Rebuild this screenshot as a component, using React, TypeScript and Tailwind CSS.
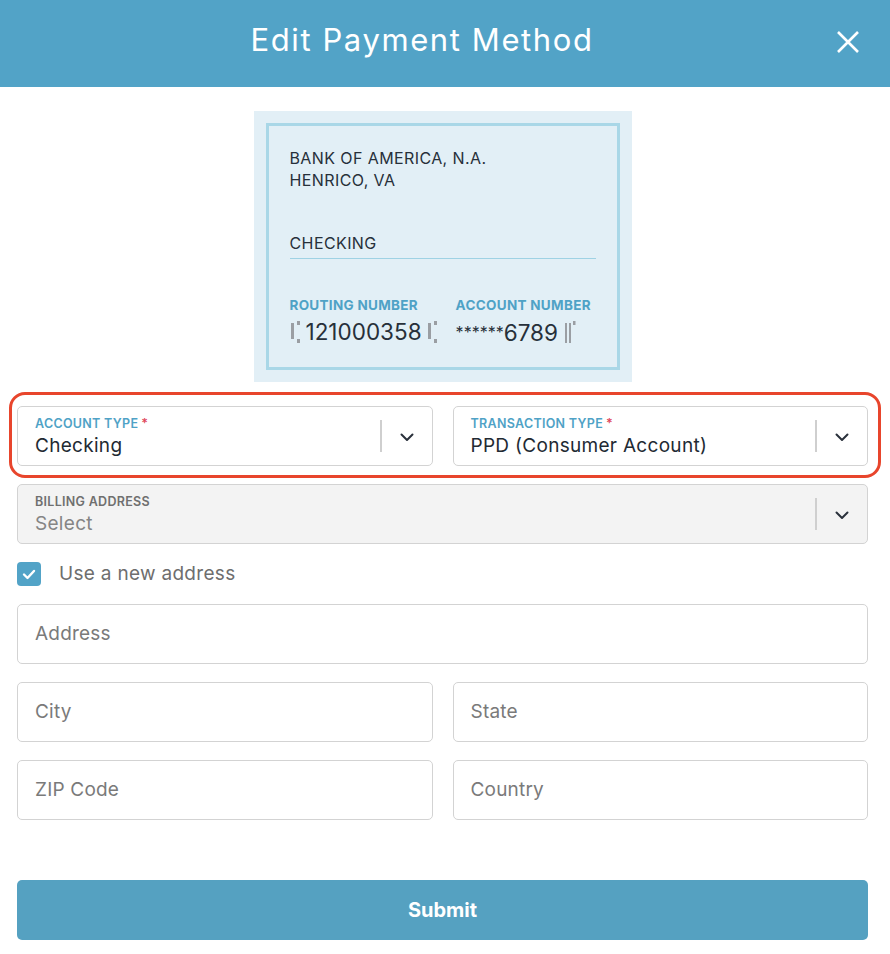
import React from "react";

const font = { fontFamily: 'Inter, "Open Sans", "Liberation Sans", sans-serif' };

function Chevron() {
    return (
        <svg width="14" height="9" viewBox="0 0 14 9" fill="none">
            <path d="M1.5 1.5 L7 7 L12.5 1.5" stroke="#2a313b" strokeWidth="2" strokeLinecap="round" strokeLinejoin="round" />
        </svg>
    );
}

function Transit() {
    return (
        <svg width="11" height="23" viewBox="0 0 11 23" className="shrink-0">
            <rect x="1" y="2" width="3" height="16" fill="#9a9ea3" />
            <rect x="7" y="0" width="3" height="4" fill="#9a9ea3" />
            <rect x="7" y="18" width="3" height="4" fill="#9a9ea3" />
        </svg>
    );
}

function OnUs() {
    return (
        <svg width="12" height="23" viewBox="0 0 12 23" className="shrink-0">
            <rect x="1" y="2" width="2" height="20" fill="#9a9ea3" />
            <rect x="5" y="2" width="2" height="20" fill="#9a9ea3" />
            <rect x="9" y="0" width="2.5" height="4" fill="#9a9ea3" />
        </svg>
    );
}

interface SelectProps {
    label: string;
    value: string;
    required?: boolean;
    disabled?: boolean;
}

function SelectField({ label, value, required, disabled }: SelectProps) {
    return (
        <div className={`flex h-[60px] items-center rounded-[5px] border border-[#d3d3d3] ${disabled ? "bg-[#f3f3f3]" : "bg-white"}`}>
            <div className="flex min-w-0 flex-1 flex-col pl-[17px] pt-[2px]">
                <div className={`text-[12.5px] font-semibold leading-[16px] tracking-[0.3px] ${disabled ? "text-[#6f6f6f]" : "text-[#4fa2c6]"}`}>
                    {label}
                    {required && <span className="ml-[3px] text-[#e0455a]">*</span>}
                </div>
                <div className={`mt-[1px] text-[19px] leading-[25px] tracking-[0.3px] ${disabled ? "text-[#858585]" : "text-[#222a33]"}`}>{value}</div>
            </div>
            <div className="h-[32px] w-[2px] bg-[#cfcfcf]" />
            <div className="flex w-[50px] justify-center pt-[2px]">
                <Chevron />
            </div>
        </div>
    );
}

function TextField({ placeholder }: { placeholder: string }) {
    return (
        <div className="flex h-[60px] items-center rounded-[5px] border border-[#d3d3d3] bg-white pl-[17px] text-[19px] tracking-[0.2px] text-[#7a7a7a]">
            {placeholder}
        </div>
    );
}

export default function App() {
    return (
        <div style={font} className="w-[890px] h-[954px] bg-white">
            <div className="relative flex h-[87px] items-center justify-center bg-[#52a3c7] pb-[6px] pr-[46px]">
                <div className="text-[31px] tracking-[1.6px] text-white">Edit Payment Method</div>
                <svg className="absolute right-[30px] top-[30px]" width="24" height="24" viewBox="0 0 24 24">
                    <path d="M2 2 L22 22 M22 2 L2 22" stroke="white" strokeWidth="2.6" />
                </svg>
            </div>

            <div className="pl-[17px] pr-[22px] pt-[24px]">
                <div className="flex justify-center">
                    <div className="w-[378px] bg-[#e2eff6] p-[12px]">
                        <div className="h-[247px] border-[3px] border-[#a9d7e7] px-[21px] pt-[21px] text-[#27303a]">
                            <div className="text-[16px] leading-[22px] tracking-[0.4px]">BANK OF AMERICA, N.A.</div>
                            <div className="text-[16px] leading-[22px] tracking-[0.4px]">HENRICO, VA</div>
                            <div className="mt-[41px] border-b border-[#9fd2e4] pb-[4px] text-[16px] leading-[22px] tracking-[0.4px]">CHECKING</div>
                            <div className="mt-[38px] flex gap-[18px]">
                                <div className="flex flex-col">
                                    <div className="text-[13.5px] font-bold leading-[16px] tracking-[0.3px] text-[#4fa2c6]">ROUTING NUMBER</div>
                                    <div className="mt-[5px] flex items-center gap-[5px]">
                                        <Transit />
                                        <span className="text-[22.5px] leading-[28px]">121000358</span>
                                        <Transit />
                                    </div>
                                </div>
                                <div className="flex flex-col">
                                    <div className="text-[13.5px] font-bold leading-[16px] tracking-[0.3px] text-[#4fa2c6]">ACCOUNT NUMBER</div>
                                    <div className="mt-[5px] flex items-center gap-[6px]">
                                        <span className="text-[22.5px] leading-[28px]">
                                            <span className="align-[3px] text-[16px]">******</span>6789
                                        </span>
                                        <OnUs />
                                    </div>
                                </div>
                            </div>
                        </div>
                    </div>
                </div>

                <div className="relative mt-[24px] grid grid-cols-2 gap-[20px]">
                    <SelectField label="ACCOUNT TYPE" value="Checking" required />
                    <SelectField label="TRANSACTION TYPE" value="PPD (Consumer Account)" required />
                    <div className="pointer-events-none absolute -left-[8px] -right-[13px] -top-[14px] -bottom-[12px] rounded-[16px] border-[3px] border-[#e8452c]" />
                </div>

                <div className="mt-[18px]">
                    <SelectField label="BILLING ADDRESS" value="Select" disabled />
                </div>

                <div className="mt-[18px] flex h-[24px] items-center gap-[18px]">
                    <div className="flex h-[24px] w-[24px] items-center justify-center rounded-[4px] bg-[#52a3c7]">
                        <svg width="14" height="11" viewBox="0 0 14 11">
                            <path d="M2 5.5 L5.5 9 L12 2" stroke="white" strokeWidth="2.4" fill="none" strokeLinecap="round" strokeLinejoin="round" />
                        </svg>
                    </div>
                    <span className="text-[19px] leading-[24px] tracking-[0.3px] text-[#6e6e6e]">Use a new address</span>
                </div>

                <div className="mt-[18px] flex flex-col gap-[18px]">
                    <TextField placeholder="Address" />
                    <div className="grid grid-cols-2 gap-[20px]">
                        <TextField placeholder="City" />
                        <TextField placeholder="State" />
                    </div>
                    <div className="grid grid-cols-2 gap-[20px]">
                        <TextField placeholder="ZIP Code" />
                        <TextField placeholder="Country" />
                    </div>
                </div>

                <button className="mt-[60px] flex h-[60px] w-full items-center justify-center rounded-[5px] bg-[#55a1c1] text-[20px] font-bold text-white">
                    Submit
                </button>
            </div>
        </div>
    );
}
